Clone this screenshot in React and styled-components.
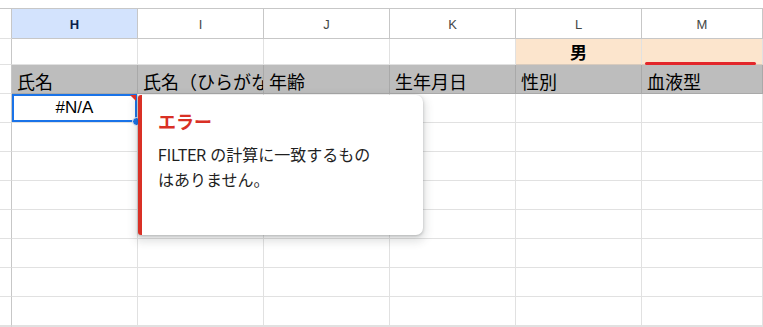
import React from "react";
import styled, { createGlobalStyle } from "styled-components";

const Global = createGlobalStyle`
  html, body { margin: 0; padding: 0; background: #fff; }
  body { font-family: "Liberation Sans", "Noto Sans CJK JP", sans-serif; overflow: hidden; }
`;

const Page = styled.div`
  position: relative;
  width: 763px;
  height: 327px;
  overflow: hidden;
  background: #fff;
`;

const TopStrip = styled.div`
  height: 9px;
  border-bottom: 1px solid #c7c7c7;
  box-sizing: border-box;
`;

const Grid = styled.div`
  display: grid;
  grid-template-columns: 12px repeat(5, 126px) 121px;
  grid-template-rows: 30px 26px 29px repeat(8, 29px);
`;

const Cell = styled.div`
  position: relative;
  box-sizing: border-box;
  border-right: 1px solid #e1e1e1;
  border-bottom: 1px solid #e1e1e1;
  background: #fff;
  display: flex;
  align-items: center;
  justify-content: ${(p) => (p.$center ? "center" : "flex-start")};
  padding: 0 4px;
  white-space: nowrap;
  overflow: hidden;
  color: #000;
`;

const RowHead = styled(Cell)`
  padding: 0;
  border-right: 1px solid #c7c7c7;
`;

const ColHead = styled(Cell)`
  justify-content: center;
  font-size: 13px;
  border-right: 1px solid #c7c7c7;
  border-bottom: 1px solid #c7c7c7;
  background: ${(p) => (p.$active ? "#d3e3fd" : "#fff")};
  color: ${(p) => (p.$active ? "#0b1f4b" : "#444746")};
  font-weight: ${(p) => (p.$active ? 700 : 400)};
  padding-top: 1px;
`;

const HeaderCell = styled(Cell)`
  font-size: 18px;
  background: #bdbdbd;
  border-right: 1px solid #a9a9a9;
  border-bottom: 1px solid #a9a9a9;
  padding: 3px 4px 0 5px;
`;

const GenderCell = styled(Cell)`
  font-size: 17px;
  font-weight: 700;
  background: #fce5cd;
  border-bottom: 1px solid #d9cbbd;
  overflow: visible;
`;

const Underline = styled.span`
  position: absolute;
  left: 3px;
  right: 6px;
  bottom: -1px;
  height: 3px;
  border-radius: 2px;
  background: #e3262a;
`;

const ValueCell = styled(Cell)`
  font-size: 17px;
  overflow: visible;
  box-shadow: ${(p) => (p.$selected ? "inset 0 0 0 2px #1a73e8" : "none")};
  z-index: ${(p) => (p.$selected ? 2 : 0)};
`;

const ErrorMark = styled.span`
  position: absolute;
  top: 1px;
  right: 1px;
  width: 0;
  height: 0;
  border-top: 6px solid #e0312b;
  border-left: 6px solid transparent;
`;

const Handle = styled.span`
  position: absolute;
  right: -4px;
  bottom: -4px;
  width: 7px;
  height: 7px;
  border-radius: 50%;
  background: #1a73e8;
  border: 1px solid #fff;
`;

const Tooltip = styled.div`
  position: absolute;
  left: 138px;
  top: 95px;
  width: 285px;
  height: 140px;
  box-sizing: border-box;
  background: #fff;
  border-left: 4px solid #d93025;
  border-radius: 3px 7px 7px 3px;
  box-shadow: 0 4px 8px 3px rgba(60, 64, 67, 0.15), 0 1px 3px rgba(60, 64, 67, 0.3);
  padding: 15px 16px 0 16px;
  z-index: 5;
  font-family: "Roboto", "Noto Sans CJK JP", sans-serif;
`;

const TipTitle = styled.div`
  color: #d93025;
  font-size: 18px;
  font-weight: 700;
  line-height: 26px;
`;

const TipBody = styled.div`
  margin-top: 7px;
  color: #1f1f1f;
  font-size: 16px;
  line-height: 25px;
  width: 222px;
`;

const cols = ["H", "I", "J", "K", "L", "M"];
const headers = ["氏名", "氏名（ひらがな）", "年齢", "生年月日", "性別", "血液型"];

export default function App() {
  const emptyRows = Array.from({ length: 8 });
  return (
    <Page>
      <Global />
      <TopStrip />
      <Grid>
        <RowHead />
        {cols.map((c, i) => (
          <ColHead key={c} $active={i === 0}>{c}</ColHead>
        ))}

        <RowHead />
        {cols.map((c, i) =>
          i === 4 ? (
            <GenderCell key={c} $center>男</GenderCell>
          ) : i === 5 ? (
            <GenderCell key={c}>
              <Underline />
            </GenderCell>
          ) : (
            <Cell key={c} />
          )
        )}

        <RowHead />
        {headers.map((h) => (
          <HeaderCell key={h}>{h}</HeaderCell>
        ))}

        <RowHead />
        <ValueCell $selected $center>
          #N/A
          <ErrorMark />
          <Handle />
        </ValueCell>
        {cols.slice(1).map((c) => (
          <Cell key={c} />
        ))}

        {emptyRows.map((_, r) => (
          <React.Fragment key={r}>
            <RowHead />
            {cols.map((c) => (
              <Cell key={c} />
            ))}
          </React.Fragment>
        ))}
      </Grid>
      <Tooltip>
        <TipTitle>エラー</TipTitle>
        <TipBody>FILTER の計算に一致するものはありません。</TipBody>
      </Tooltip>
    </Page>
  );
}
